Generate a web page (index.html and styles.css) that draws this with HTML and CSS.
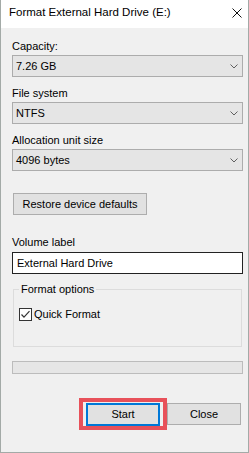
FILE: index.html
```html
<!DOCTYPE html>
<html lang="en">
<head>
  <meta charset="UTF-8">
  <meta name="viewport" content="width=device-width, initial-scale=1.0">
  <title>Format External Hard Drive (E:)</title>
  <link rel="stylesheet" href="styles.css">
</head>
<body>

<div class="window">
  <div class="titlebar">
    <span class="title">Format External Hard Drive (E:)</span>
    <svg class="close-x" width="10" height="10" viewBox="0 0 10 10">
      <path d="M0.5 0.5 L9.5 9.5 M9.5 0.5 L0.5 9.5" stroke="#111" stroke-width="1" fill="none"/>
    </svg>
  </div>

  <div class="content">
    <div class="field-label first">Capacity:</div>
    <div class="combo">
      <span>7.26 GB</span>
      <svg class="chevron" width="8" height="5" viewBox="0 0 8 5"><polyline points="0.5,0.5 4,4 7.5,0.5" fill="none" stroke="#606060"/></svg>
    </div>

    <div class="field-label">File system</div>
    <div class="combo">
      <span>NTFS</span>
      <svg class="chevron" width="8" height="5" viewBox="0 0 8 5"><polyline points="0.5,0.5 4,4 7.5,0.5" fill="none" stroke="#606060"/></svg>
    </div>

    <div class="field-label">Allocation unit size</div>
    <div class="combo">
      <span>4096 bytes</span>
      <svg class="chevron" width="8" height="5" viewBox="0 0 8 5"><polyline points="0.5,0.5 4,4 7.5,0.5" fill="none" stroke="#606060"/></svg>
    </div>

    <button class="btn restore">Restore device defaults</button>

    <div class="field-label volume">Volume label</div>
    <div class="textbox">External Hard Drive</div>

    <div class="group">
      <div class="group-title">Format options</div>
      <div class="check-row">
        <span class="checkbox">
          <svg width="11" height="11" viewBox="0 0 11 11"><polyline points="1.5,5.5 4,8.2 9.5,2.2" fill="none" stroke="#333" stroke-width="1.2"/></svg>
        </span>
        <span>Quick Format</span>
      </div>
    </div>

    <div class="progress"></div>

    <div class="actions">
      <span class="highlight"><button class="btn start">Start</button></span>
      <button class="btn close">Close</button>
    </div>
  </div>
</div>

</body>
</html>
```

FILE: styles.css
```css
body {
  margin: 0;
  font-family: "Segoe UI", "Liberation Sans", Arial, sans-serif;
  font-size: 11px;
  line-height: 15px;
  color: #000;
}
.window {
  width: 249px;
  height: 453px;
  box-sizing: border-box;
  border: 1px solid #a3aaa7;
  border-top: none;
  background: #f0f0f0;
}
.titlebar {
  height: 28px;
  background: #fff;
  display: flex;
  align-items: flex-start;
  padding: 5px 0 0 8px;
  box-sizing: border-box;
}
.title {
  font-size: 11.5px;
}
.close-x {
  margin: 3px 6px 0 auto;
}
.content {
  padding: 0 5px 0 11px;
}
.field-label {
  margin-top: 9px;
  margin-bottom: 1px;
}
.field-label.first {
  margin-top: 11px;
}
.field-label.volume {
  margin-top: 20px;
  margin-bottom: 2px;
}
.combo {
  height: 22px;
  box-sizing: border-box;
  border: 1px solid #acacac;
  background: #e5e5e5;
  display: flex;
  align-items: center;
  padding: 0 4px 0 3px;
}
.chevron {
  margin-left: auto;
}
.btn {
  font-family: inherit;
  font-size: 11px;
  line-height: 15px;
  color: #000;
  background: #e1e1e1;
  border: 1px solid #adadad;
  padding: 0;
  height: 22px;
  box-sizing: border-box;
}
.restore {
  display: block;
  margin: 22px 0 0 1px;
  width: 134px;
}
.textbox {
  height: 22px;
  box-sizing: border-box;
  border: 1px solid #222;
  background: #fff;
  padding: 0 4px;
  display: flex;
  align-items: center;
}
.group {
  margin: 15px 1px 0 1px;
  height: 58px;
  box-sizing: border-box;
  border: 1px solid #dcdcdc;
  padding: 0 5px;
}
.group-title {
  width: max-content;
  margin-top: -8px;
  padding: 0 2px;
  background: #f0f0f0;
}
.check-row {
  display: flex;
  align-items: center;
  gap: 2px;
  margin-top: 10px;
}
.checkbox {
  width: 13px;
  height: 13px;
  box-sizing: border-box;
  border: 1px solid #333;
  background: #fff;
  display: flex;
}
.progress {
  margin-top: 14px;
  height: 13px;
  box-sizing: border-box;
  border: 1px solid #bcbcbc;
  background: #e6e6e6;
}
.actions {
  margin-top: 24px;
  padding-right: 2px;
  display: flex;
  justify-content: flex-end;
  align-items: flex-start;
}
.highlight {
  display: flex;
  border: 4px solid #e8515a;
  padding: 1px 3px 0 3px;
}
.start {
  width: 74px;
  height: 23px;
  border: 2px solid #0078d7;
}
.close {
  width: 74px;
  height: 22px;
  margin-top: 5px;
}
```
